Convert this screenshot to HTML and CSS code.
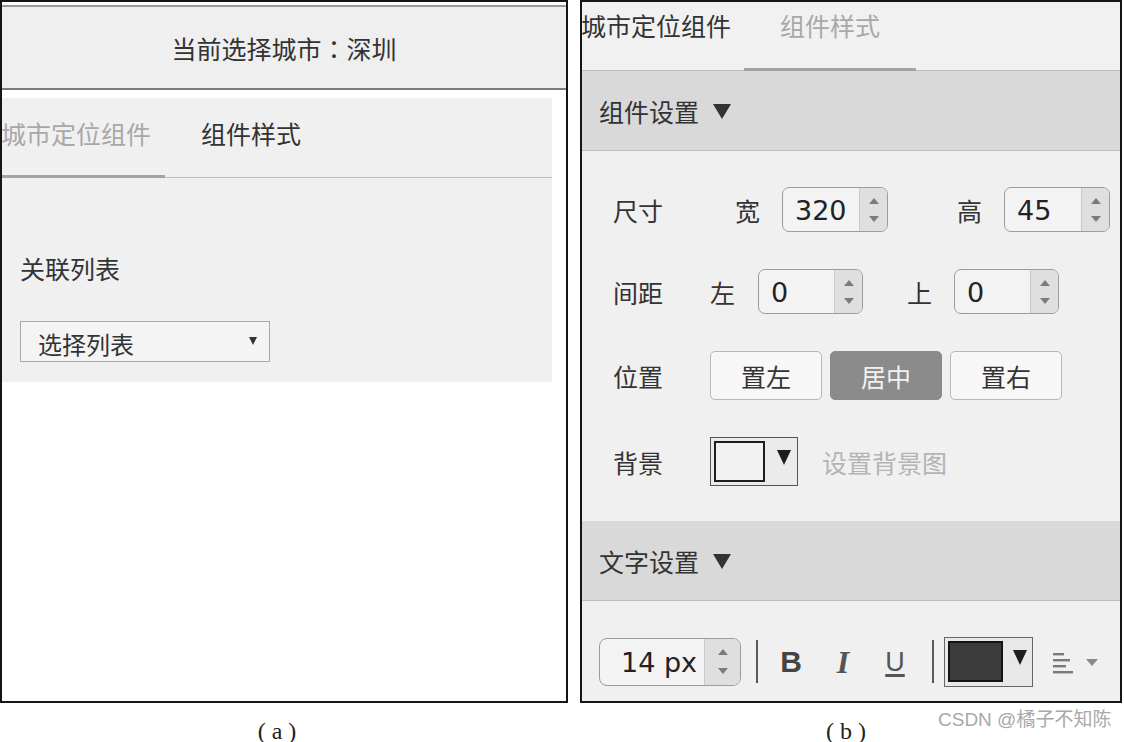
FILE: index.html
```html
<!DOCTYPE html>
<html lang="zh-CN">
<head>
<meta charset="utf-8">
<title>城市定位组件</title>
<link rel="stylesheet" href="styles.css">
</head>
<body>
<div class="page">
  <div class="fig fig-a">
    <div class="frame frame-a">
      <div class="cur-header">当前选择城市<span class="colon">：</span>深圳</div>
      <div class="panel-a">
        <div class="tabs tabs-a">
          <div class="tab tab-first is-under">城市定位组件</div>
          <div class="tab tab-second is-dark">组件样式</div>
        </div>
        <div class="field-label">关联列表</div>
        <div class="select">
          <span class="select-text">选择列表</span>
          <svg class="select-arrow" width="10" height="10" viewBox="0 0 10 10"><polygon points="1,1 9,1 5,9" fill="#333"/></svg>
        </div>
      </div>
    </div>
    <div class="caption caption-a">( a )</div>
  </div>

  <div class="fig fig-b">
    <div class="frame frame-b">
      <div class="tabs tabs-b">
        <div class="tab tab-first is-dark">城市定位组件</div>
        <div class="tab tab-second is-under">组件样式</div>
      </div>

      <div class="sec-head">
        <span>组件设置</span>
        <svg class="sec-tri" width="18" height="15" viewBox="0 0 18 15"><polygon points="0,0 18,0 9,15" fill="#333"/></svg>
      </div>
      <div class="sec-body settings">
        <div class="row">
          <div class="row-label">尺寸</div>
          <span class="sub sub-w">宽</span>
          <div class="num">
            <span class="num-val">320</span>
            <span class="spin"><i class="up"></i><i class="down"></i></span>
          </div>
          <span class="sub sub-h">高</span>
          <div class="num">
            <span class="num-val">45</span>
            <span class="spin"><i class="up"></i><i class="down"></i></span>
          </div>
        </div>
        <div class="row">
          <div class="row-label">间距</div>
          <span class="sub sub-l">左</span>
          <div class="num num-sm">
            <span class="num-val">0</span>
            <span class="spin"><i class="up"></i><i class="down"></i></span>
          </div>
          <span class="sub sub-t">上</span>
          <div class="num num-sm">
            <span class="num-val">0</span>
            <span class="spin"><i class="up"></i><i class="down"></i></span>
          </div>
        </div>
        <div class="row">
          <div class="row-label">位置</div>
          <div class="btn-group">
            <span class="btn">置左</span>
            <span class="btn btn-active">居中</span>
            <span class="btn">置右</span>
          </div>
        </div>
        <div class="row">
          <div class="row-label">背景</div>
          <div class="picker">
            <span class="swatch swatch-light"></span>
            <svg class="picker-tri" width="14" height="15" viewBox="0 0 14 15"><polygon points="0,0 14,0 7,15" fill="#1e1e1e"/></svg>
          </div>
          <span class="link-muted">设置背景图</span>
        </div>
      </div>

      <div class="sec-head">
        <span>文字设置</span>
        <svg class="sec-tri" width="18" height="15" viewBox="0 0 18 15"><polygon points="0,0 18,0 9,15" fill="#333"/></svg>
      </div>
      <div class="sec-body toolbar">
        <div class="num num-font">
          <span class="num-val">14 px</span>
          <span class="spin"><i class="up"></i><i class="down"></i></span>
        </div>
        <span class="vsep"></span>
        <span class="fmt fmt-b">B</span>
        <span class="fmt fmt-i">I</span>
        <span class="fmt fmt-u">U</span>
        <span class="vsep vsep-2"></span>
        <div class="picker picker-dark">
          <span class="swatch swatch-dark"></span>
          <svg class="picker-tri" width="14" height="15" viewBox="0 0 14 15"><polygon points="0,0 14,0 7,15" fill="#1e1e1e"/></svg>
        </div>
        <svg class="align-icon" width="22" height="24" viewBox="0 0 22 24">
          <rect x="0" y="2" width="11" height="2.4" fill="#7a7a7a"/>
          <rect x="0" y="8" width="17" height="2.4" fill="#7a7a7a"/>
          <rect x="0" y="14" width="13" height="2.4" fill="#7a7a7a"/>
          <rect x="0" y="20" width="20" height="2.4" fill="#7a7a7a"/>
        </svg>
        <svg class="align-caret" width="12" height="7" viewBox="0 0 12 7"><polygon points="0,0 12,0 6,7" fill="#8a8a8a"/></svg>
      </div>
    </div>
    <div class="caption caption-b">( b )</div>
    <div class="watermark">CSDN @橘子不知陈</div>
  </div>
</div>
</body>
</html>
```

FILE: styles.css
```css
* { box-sizing: border-box; }

html, body {
  margin: 0;
  padding: 0;
  background: #ffffff;
}

body {
  width: 1124px;
  height: 742px;
  overflow: hidden;
  font-family: "Noto Sans CJK SC", "Noto Sans", sans-serif;
  color: #333333;
}

.page {
  display: flex;
  gap: 12px;
}

.fig {
  position: relative;
  display: flex;
  flex-direction: column;
}

.fig-a { width: 568px; }
.fig-b { width: 542px; }

.frame {
  height: 703px;
  border: 2px solid #151515;
  background: #ffffff;
  overflow: hidden;
}

/* ---------- panel (a) ---------- */
.cur-header {
  margin-top: 3px;
  height: 85px;
  border-top: 2px solid #9a9a9a;
  border-bottom: 2px solid #7c7c7c;
  background: #efefef;
  display: flex;
  align-items: center;
  justify-content: center;
  font-size: 25px;
  color: #333;
  padding-left: 0;
}

.colon {
  font-family: "Noto Sans CJK TC", "Noto Sans CJK SC", sans-serif;
}

.panel-a {
  margin-top: 8px;
  width: 550px;
  height: 284px;
  background: #f0f0f0;
  display: flex;
  flex-direction: column;
}

.tabs {
  display: flex;
  border-bottom: 1px solid #bdbdbd;
  flex-shrink: 0;
}

.tabs-a {
  height: 80px;
  background: #f0f0f0;
}

.tabs-b {
  height: 69px;
  background: #f1f1f1;
}

.tab {
  font-size: 25px;
  line-height: 30px;
  white-space: nowrap;
  overflow: hidden;
  color: #333;
  margin-bottom: -1px;
  border-bottom: 3px solid transparent;
}

.tabs-a .tab { padding-top: 20px; }
.tabs-b .tab { padding-top: 8px; }

.tab-first {
  width: 163px;
  text-align: left;
  text-indent: -1px;
}

.tab-second {
  width: 172px;
  text-align: center;
}

.tab.is-under {
  color: #a8a8a8;
  border-bottom-color: #a3a3a3;
}

.tab.is-dark { color: #333; }

.tabs-b .tab-first { width: 162px; }

.field-label {
  margin-top: 75px;
  padding-left: 18px;
  font-size: 25px;
  line-height: 30px;
  color: #333;
}

.select {
  margin-top: 38px;
  margin-left: 18px;
  width: 250px;
  height: 41px;
  border: 1px solid #a9a9a9;
  background: #f4f4f4;
  display: flex;
  align-items: center;
  justify-content: space-between;
  padding: 0 11px 0 17px;
}

.select-text {
  font-size: 24px;
  line-height: 30px;
  padding-top: 4px;
}

.select-arrow { margin-top: -2px; }

.caption {
  margin-top: 13px;
  font-family: "Liberation Serif", "DejaVu Serif", serif;
  font-size: 24px;
  line-height: 30px;
  text-align: center;
  color: #222;
}

.caption-a { padding-right: 14px; }
.caption-b { padding-right: 10px; }

.watermark {
  position: absolute;
  left: 358px;
  top: 708px;
  font-family: "Liberation Sans", "Noto Sans CJK SC", sans-serif;
  font-size: 19px;
  line-height: 24px;
  color: #a8a8a8;
  white-space: nowrap;
}

/* ---------- panel (b) ---------- */
.sec-head {
  height: 80px;
  background: #d9d9d9;
  border-bottom: 1px solid #bdbdbd;
  display: flex;
  align-items: center;
  padding-left: 17px;
  font-size: 25px;
  color: #333;
  flex-shrink: 0;
}

.sec-tri {
  margin-left: 14px;
  margin-top: 2px;
}

.sec-body {
  background: #f0f0f0;
}

.settings {
  height: 370px;
  padding-top: 36px;
  display: grid;
  grid-template-rows: 45px 45px 49px 49px;
  row-gap: 37px;
  align-content: start;
}

.row {
  display: flex;
  align-items: center;
  padding-left: 31px;
}

.row-label {
  width: 97px;
  font-size: 25px;
  color: #333;
  flex-shrink: 0;
}

.sub {
  font-size: 25px;
  color: #333;
  width: 25px;
  line-height: 30px;
}

.sub-w { margin-left: 25px; margin-right: 22px; }
.sub-h { margin-left: 69px; margin-right: 22px; }
.sub-l { margin-right: 23px; }
.sub-t { margin-left: 44px; margin-right: 22px; }

.num {
  display: flex;
  width: 106px;
  height: 45px;
  border: 1px solid #9c9c9c;
  border-radius: 7px;
  background: #f3f3f3;
  overflow: hidden;
}

.num-sm { width: 105px; }

.num-val {
  flex: 1;
  padding-left: 12px;
  font-family: "DejaVu Sans", "Noto Sans", sans-serif;
  font-size: 27px;
  line-height: 45px;
  color: #222;
  white-space: pre;
}

.spin {
  width: 28px;
  border-left: 1px solid #c9c9c9;
  background: #dfdfdf;
  display: flex;
  flex-direction: column;
  align-items: center;
  justify-content: center;
  gap: 12px;
}

.spin i {
  display: block;
  width: 0;
  height: 0;
  border-left: 5px solid transparent;
  border-right: 5px solid transparent;
}

.spin .up { border-bottom: 6px solid #7b7b7b; }
.spin .down { border-top: 6px solid #7b7b7b; }

.btn-group {
  display: flex;
  gap: 8px;
}

.btn {
  width: 112px;
  height: 49px;
  border: 1px solid #b7b7b7;
  border-radius: 5px;
  background: #f7f7f7;
  display: flex;
  align-items: center;
  justify-content: center;
  font-size: 25px;
  color: #333;
}

.btn-active {
  background: #8b8b8b;
  border-color: #8b8b8b;
  color: #f2f2f2;
}

.picker {
  width: 88px;
  height: 49px;
  border: 1px solid #555;
  background: #ebebeb;
  display: flex;
  align-items: center;
  padding-left: 3px;
  flex-shrink: 0;
}

.swatch {
  display: block;
  width: 51px;
  height: 41px;
  border: 2px solid #1e1e1e;
}

.swatch-light { background: #f2f2f2; }

.picker-tri {
  margin-left: 12px;
  margin-top: -8px;
}

.link-muted {
  margin-left: 24px;
  font-size: 25px;
  color: #b4b4b4;
}

.toolbar {
  height: 101px;
  display: flex;
  align-items: center;
  padding-left: 17px;
  padding-top: 20px;
}

.num-font {
  width: 142px;
  height: 48px;
  border-radius: 8px;
}

.num-font .num-val {
  padding-left: 21px;
  line-height: 48px;
}

.num-font .spin {
  width: 36px;
  gap: 13px;
}

.vsep {
  display: block;
  width: 2px;
  height: 43px;
  background: #5a5a5a;
  margin-left: 15px;
  margin-right: 7px;
}

.vsep-2 {
  margin-left: 11px;
  margin-right: 10px;
}

.fmt {
  width: 52px;
  text-align: center;
  color: #444;
  line-height: 34px;
}

.fmt-b {
  font-family: "Liberation Sans", "DejaVu Sans", sans-serif;
  font-weight: bold;
  font-size: 30px;
}

.fmt-i {
  font-family: "Liberation Serif", serif;
  font-style: italic;
  font-weight: bold;
  font-size: 32px;
  color: #555;
}

.fmt-u {
  font-family: "Liberation Sans", "DejaVu Sans", sans-serif;
  font-size: 27px;
  color: #555;
  text-decoration: underline;
  text-decoration-thickness: 3px;
  text-underline-offset: 3px;
}

.picker-dark {
  width: 89px;
  height: 50px;
  border-color: #666;
  background: #e8e8e8;
}

.swatch-dark {
  width: 55px;
  height: 41px;
  background: #3b3b3b;
  border-color: #141414;
}

.picker-dark .picker-tri { margin-left: 10px; }

.align-icon {
  margin-left: 20px;
  margin-top: 2px;
}

.align-caret {
  margin-left: 11px;
  margin-top: 2px;
}
```
